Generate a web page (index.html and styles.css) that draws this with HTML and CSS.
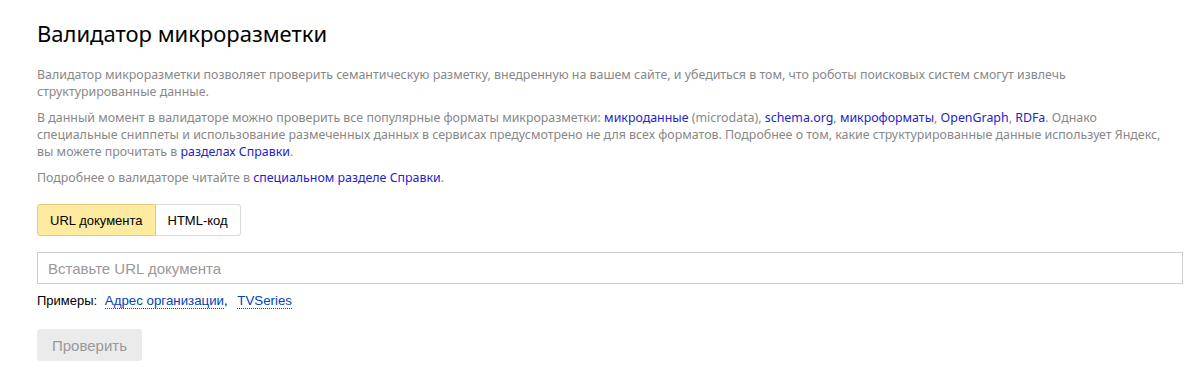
FILE: index.html
```html
<!DOCTYPE html>
<html lang="ru">
<head>
    <meta charset="UTF-8">
    <title>Валидатор микроразметки</title>
    <link rel="stylesheet" href="styles.css">
</head>
<body>
    <div class="page">
        <h1 class="title">Валидатор микроразметки</h1>

        <div class="intro">
            <p>Валидатор микроразметки позволяет проверить семантическую разметку, внедренную на вашем сайте, и убедиться в том, что роботы поисковых систем смогут извлечь структурированные данные.</p>
            <p>В данный момент в валидаторе можно проверить все популярные форматы микроразметки: <a href="#">микроданные</a> (microdata), <a href="#">schema.org</a>, <a href="#">микроформаты</a>, <a href="#">OpenGraph</a>, <a href="#">RDFa</a>. Однако специальные сниппеты и использование размеченных данных в сервисах предусмотрено не для всех форматов. Подробнее о том, какие структурированные данные использует Яндекс, вы можете прочитать в <a href="#">разделах Справки</a>.</p>
            <p>Подробнее о валидаторе читайте в <a href="#">специальном разделе Справки</a>.</p>
        </div>

        <div class="tabs">
            <button class="tab tab-active">URL документа</button>
            <button class="tab">HTML-код</button>
        </div>

        <input class="url-input" type="text" placeholder="Вставьте URL документа">

        <div class="examples">
            Примеры:
            <a class="example" href="#">Адрес организации</a>,
            <a class="example" href="#">TVSeries</a>
        </div>

        <button class="btn-check" disabled>Проверить</button>
    </div>
</body>
</html>
```

FILE: styles.css
```css
body {
    margin: 0;
    background: #fff;
    font-family: 'Noto Sans', sans-serif;
}
.page {
    padding: 18px 20px 0 37px;
}
.title {
    margin: 0 0 18px 0;
    font-family: 'Noto Sans', sans-serif;
    font-weight: normal;
    font-size: 22px;
    line-height: 30px;
    color: #000;
}
.intro {
    max-width: 1135px;
}
.intro p {
    margin: 0 0 9px 0;
    font-size: 12.4px;
    line-height: 17px;
    color: #888;
}
.intro a {
    color: #2323c8;
    text-decoration: none;
}
.tabs {
    display: flex;
    margin-top: 18px;
}
.tab {
    height: 32px;
    padding: 0 12px;
    border: 1px solid #d9d9d9;
    background: #fff;
    font-family: 'Liberation Sans', sans-serif;
    font-size: 13px;
    color: #000;
    cursor: pointer;
}
.tab:first-child {
    border-radius: 3px 0 0 3px;
}
.tab:last-child {
    border-left: none;
    border-radius: 0 3px 3px 0;
}
.tab-active {
    background: #ffeba0;
    border-color: #e3cd7b;
}
.url-input {
    display: block;
    box-sizing: border-box;
    width: 1146px;
    height: 32px;
    margin-top: 16px;
    padding: 0 10px;
    border: 1px solid #ccc;
    font-family: 'Liberation Sans', sans-serif;
    font-size: 15px;
    outline: none;
}
.url-input::placeholder {
    color: #999;
}
.examples {
    margin-top: 8px;
    font-family: 'Liberation Sans', sans-serif;
    font-size: 13px;
    line-height: 18px;
    color: #000;
}
.example {
    margin-left: 4px;
    color: #04b;
    font-size: 13.3px;
    text-decoration: none;
    border-bottom: 1px dotted #04b;
}
.example + .example {
    margin-left: 6px;
}
.btn-check {
    display: block;
    margin-top: 19px;
    height: 32px;
    padding: 0 15px;
    border: none;
    border-radius: 3px;
    background: #ebebeb;
    font-family: 'Liberation Sans', sans-serif;
    font-size: 15px;
    color: #999;
}
```
